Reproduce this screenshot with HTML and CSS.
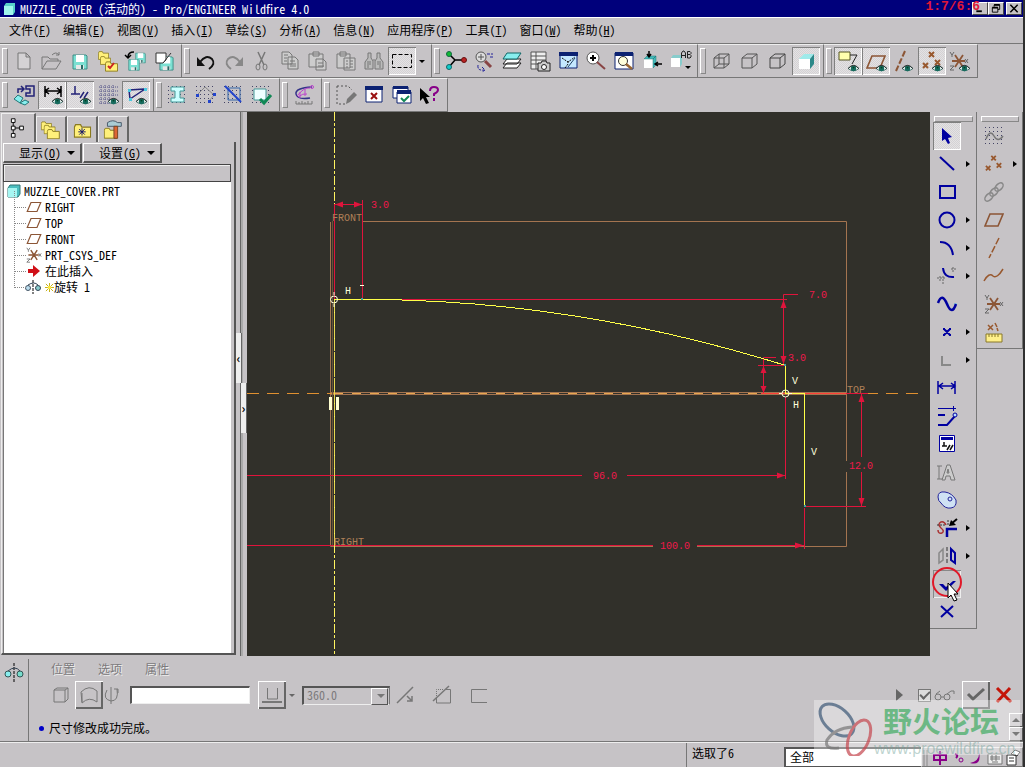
FILE: index.html
```html
<!DOCTYPE html>
<html lang="zh-CN">
<head>
<meta charset="utf-8">
<title>MUZZLE_COVER (活动的) - Pro/ENGINEER Wildfire 4.0</title>
<link rel="stylesheet" href="styles.css">
</head>
<body>
<svg class="defs" aria-hidden="true">
  <symbol id="eye" viewBox="0 0 12 10"><path d="M0 5Q6-1 12 5Q6 10 0 5z" fill="#fff" stroke="#27635a"/><circle cx="6" cy="5" r="3" fill="#176b5e"/><circle cx="6" cy="4" r="1" fill="#042"/><path d="M0 5Q6-2 12 5" fill="none" stroke="#222"/></symbol>
  <symbol id="disk" viewBox="0 0 16 16"><path d="M1 1h13l1 1v13H1z" fill="#7be0d2" stroke="#3c8c86"/><path d="M4 1h8v7H4z" fill="#fff"/><path d="M4 11h8v4H4z" fill="#e8e8e8"/><path d="M9 11h2v4H9z" fill="#286a66"/></symbol>
  <symbol id="folder" viewBox="0 0 14 11"><path d="M.5 2.500l1-2h4l1 2h7v8H.5z" fill="#fff07a" stroke="#8a7a20"/></symbol>
  <symbol id="plane" viewBox="0 0 20 16"><path d="M6 2h13l-5 12H1z" fill="none" stroke="#8c5636" stroke-width="1.600"/></symbol>
  <symbol id="csys" viewBox="0 0 20 20"><path d="M3 10h13M6 4l8 12M14 4L6 16" stroke="#8c5636" stroke-width="1.800" fill="none"/><path d="M1 1l2 3 2-3M3 4v2M16 8l3 4M19 8l-3 4M1 15h4l-4 4h4" stroke="#666" fill="none"/></symbol>
  <symbol id="xs" viewBox="0 0 20 20"><path d="M7 1l5 5M12 1L7 6M1 12l5 5M6 12l-5 5M13 9l5 5M18 9l-5 5" stroke="#98582e" stroke-width="2"/></symbol>
  <symbol id="grid" viewBox="0 0 20 20"><path d="M1 1.500h19M1 5.500h19M1 9.500h19M1 13.500h19M1 17.500h19" stroke="#446" stroke-dasharray="1 3"/></symbol>
</svg>

<header class="titlebar">
  <svg class="appicon" viewBox="0 0 14 14"><path d="M2 4l2-3h9v9l-2 3H2z" fill="#58d0c8"/><path d="M2 4h9v9H2z" fill="#a0f4ec"/></svg>
  <h1>MUZZLE_COVER (活动的) - Pro/ENGINEER Wildfire 4.0</h1>
  <div class="winbtns">
    <button aria-label="最小化"><svg viewBox="0 0 14 12"><path d="M3 9h6" stroke="#000" stroke-width="2"/></svg></button>
    <button aria-label="还原"><svg viewBox="0 0 14 12"><path d="M5 4V2h6v5H9M3 5h6v5H3z" fill="none" stroke="#000"/><path d="M5 2h6M3 5h6" stroke="#000" stroke-width="2"/></svg></button>
    <button class="close" aria-label="关闭"><svg viewBox="0 0 14 12"><path d="M3 2l8 8M11 2l-8 8" stroke="#000" stroke-width="1.600"/></svg></button>
  </div>
  <span class="clock">1:7/6:6</span>
</header>

<nav class="menubar">
  <button>文件(<u>F</u>)</button><button>编辑(<u>E</u>)</button><button>视图(<u>V</u>)</button><button>插入(<u>I</u>)</button><button>草绘(<u>S</u>)</button><button>分析(<u>A</u>)</button><button>信息(<u>N</u>)</button><button>应用程序(<u>P</u>)</button><button>工具(<u>T</u>)</button><button>窗口(<u>W</u>)</button><button>帮助(<u>H</u>)</button>
</nav>

<div class="toolrow">
  <div class="group">
    <button aria-label="新建"><svg viewBox="0 0 28 28"><path d="M8 6h8l4 4v12H8zM16 6v4h4" fill="#d4d2d4" stroke="#777"/></svg></button>
    <button aria-label="打开"><svg viewBox="0 0 28 28"><path d="M4 22V10h6l2 2h8v2M4 22l5-8h14l-5 8zM14 8q4-4 7 0m0-3v3h-3" fill="none" stroke="#777"/></svg></button>
    <button aria-label="保存"><svg viewBox="0 0 28 28"><use href="#disk" x="6" y="7" width="16" height="16"/></svg></button>
    <button aria-label="设置工作目录"><svg viewBox="0 0 28 28"><use href="#folder" x="4" y="4" width="11" height="9"/><path d="M7 13v3h4" fill="none" stroke="#555"/><use href="#folder" x="6" y="9" width="11" height="9"/><use href="#folder" x="11" y="14" width="13" height="11"/><path d="M14 19l2 2 4-5" fill="none" stroke="#c22" stroke-width="2"/></svg></button>
    <button aria-label="保存副本"><svg viewBox="0 0 28 28"><use href="#disk" x="13" y="5" width="11" height="12"/><use href="#disk" x="6" y="12" width="12" height="12"/><path d="M6 10q0-5 6-5M3 8l3 3 3-3" fill="none" stroke="#000" stroke-width="1.500"/></svg></button>
    <button aria-label="备份"><svg viewBox="0 0 28 28"><use href="#disk" x="9" y="9" width="15" height="15"/><path d="M6 6h10v7l-3 3H6z" fill="#fff" stroke="#333"/><path d="M13 16l8-10" stroke="#333"/></svg></button>
  </div>
  <div class="group">
    <button aria-label="撤消"><svg viewBox="0 0 28 28"><path d="M8 15q6-8 12-3 4 5-3 10" fill="none" stroke="#111" stroke-width="2"/><path d="M5 10v9h8z" fill="#111"/></svg></button>
    <button aria-label="重做"><svg viewBox="0 0 28 28"><path d="M20 15q-6-8-12-3-4 5 3 10" fill="none" stroke="#888" stroke-width="2"/><path d="M23 10v9h-8z" fill="#888"/></svg></button>
    <button aria-label="剪切"><svg viewBox="0 0 28 28"><path d="M10 5l6 13M17 5l-6 13" stroke="#777" stroke-width="1.500"/><ellipse cx="10" cy="20" rx="2" ry="3" fill="none" stroke="#777"/><ellipse cx="17" cy="20" rx="2" ry="3" fill="none" stroke="#777"/></svg></button>
    <button aria-label="复制"><svg viewBox="0 0 28 28"><path d="M6 5h7l3 3v9H6zM12 10h7l3 3v9H12zM8 8h4M8 11h3M8 14h3M14 14h5M14 17h6M14 19h6" fill="#ccc" stroke="#777"/></svg></button>
    <button aria-label="粘贴"><svg viewBox="0 0 28 28"><path d="M5 7h14v13H5zM9 5h6v4H9zM12 12h7l3 3v8H12zM14 16h5M14 19h6" fill="#ccc" stroke="#777"/></svg></button>
    <button aria-label="选择性粘贴"><svg viewBox="0 0 28 28"><path d="M5 7h13v14H5zM8 5h6v4H8zM12 11h11v12H12zM14 14h2M18 14h3M14 17h2M18 17h3M14 20h2M18 20h3" fill="#ccc" stroke="#777"/></svg></button>
    <button aria-label="查找"><svg viewBox="0 0 28 28"><path d="M8 6h3v5l2 3v8H5v-7l3-4zM17 6h3v5l3 4v7h-8v-8l2-3zM13 13h2M8 14v7M20 14v7M10 14v4M18 14v4" fill="#bbb" stroke="#777"/></svg></button>
    <button class="on" aria-label="选取框"><svg viewBox="0 0 28 28"><path d="M4.500 7.500h19v13h-19z" fill="none" stroke="#000" stroke-dasharray="4 2"/></svg></button>
    <button class="drop" aria-label="选取方式"><svg viewBox="0 0 12 28"><path d="M3 13h6l-3 3z"/></svg></button>
  </div>
  <div class="group">
    <button aria-label="模型树"><svg viewBox="0 0 28 28"><path d="M7 7l6 6-6 7M13 13h9" fill="none" stroke="#000" stroke-width="1.500"/><circle cx="7" cy="7" r="2.500" fill="#1b3" stroke="#164"/><circle cx="7" cy="20" r="2.500" fill="#1cc" stroke="#166"/><circle cx="22" cy="13" r="2.500" fill="#b22" stroke="#611"/></svg></button>
    <button aria-label="重定向"><svg viewBox="0 0 28 28"><circle cx="11" cy="10" r="5" fill="#ddd" stroke="#555"/><path d="M11 7v6M8 10h6" stroke="#555"/><path d="M15 14l6 6" stroke="#844" stroke-width="3"/><path d="M17 7h6M20 10h4M8 18q-1 6 6 5m-2-3l3 3-3 2" fill="none" stroke="#229" stroke-dasharray="3 1"/></svg></button>
    <button aria-label="层"><svg viewBox="0 0 28 28"><path d="M5 21l4-5h14l-4 5zM5 17l4-5h14l-4 5z" fill="#fff" stroke="#222"/><path d="M5 12l4-6h14l-4 6z" fill="#8ee" stroke="#166"/></svg></button>
    <button aria-label="视图管理器"><svg viewBox="0 0 28 28"><path d="M5 5h15v17H5zM5 9h15M5 13h15M5 17h15M10 5v17" fill="#eee" stroke="#555"/><path d="M12 16h3l1-2h4l1 2h3v8H12z" fill="#ccc" stroke="#222"/><circle cx="18" cy="20" r="2.500" fill="#fff" stroke="#222"/></svg></button>
    <button aria-label="重画"><svg viewBox="0 0 28 28"><path d="M6 6h17v15H6z" fill="#c4e8ff" stroke="#0c2272"/><path d="M5 5h19v4H5z" fill="#0c2272"/><path d="M8 11l6 4 7-5M14 14v3l-3 4" fill="none" stroke="#111" stroke-dasharray="2 1"/><path d="M14 20l7-9" stroke="#246"/></svg></button>
    <button aria-label="放大"><svg viewBox="0 0 28 28"><circle cx="11" cy="11" r="6" fill="#fff" stroke="#555"/><path d="M8 11h6M11 8v6" stroke="#000" stroke-width="2"/><path d="M15 15l8 7" stroke="#844" stroke-width="2"/></svg></button>
    <button aria-label="重新调整"><svg viewBox="0 0 28 28"><path d="M5 6h18v16H5z" fill="#fff" stroke="#0c2272"/><path d="M5 5h18v4H5z" fill="#0c2272"/><circle cx="13" cy="14" r="4.500" fill="#ffd" stroke="#333"/><path d="M16 17l6 5" stroke="#963" stroke-width="2.500"/></svg></button>
    <button aria-label="定向"><svg viewBox="0 0 28 28"><path d="M6 12h9v9H6z" fill="#fff"/><path d="M6 12l3-3h9l-3 3zM15 12l3-3v9l-3 3z" fill="#4bb" stroke="#277" stroke-width=".5"/><path d="M11 4v6M9 7l2 3 2-3M24 17h-6M20 15l-3 2 3 2" fill="none" stroke="#000" stroke-width="1.500"/></svg></button>
    <button aria-label="已保存视图"><svg viewBox="0 0 28 28"><path d="M5 11h9v9H5z" fill="#fff"/><path d="M5 11l2-3h9l-2 3zM14 11l2-3v9l-2 3z" fill="#8cc"/><path d="M15.500 11V6l1.500-2h1l1.500 2v5M16 8.500h3M21.500 11V4.500h2.500l1 1v1l-1 1h-2 2l1 1v1.500l-1 1h-2.500" fill="none" stroke="#222"/><path d="M19 19h6l-3 3z"/></svg></button>
  </div>
  <div class="group">
    <button aria-label="线框"><svg viewBox="0 0 28 28"><path d="M6 11h10v10H6zM6 11l5-4h10l-5 4M21 7v10l-5 4M11 7v10h10M11 17l-5 4" fill="none" stroke="#555"/></svg></button>
    <button aria-label="隐藏线"><svg viewBox="0 0 28 28"><path d="M6 11h10v10H6zM6 11l5-4h10l-5 4M21 7v10l-5 4" fill="none" stroke="#555"/></svg></button>
    <button aria-label="消隐"><svg viewBox="0 0 28 28"><path d="M6 11h10v10H6zM6 11l5-4h10l-5 4M21 7v10l-5 4" fill="none" stroke="#444"/></svg></button>
    <button class="on" aria-label="着色"><svg viewBox="0 0 28 28"><path d="M7 12l5-5h10l-4 5z" fill="#9eeaea"/><path d="M18 12l4-5v10l-4 5z" fill="#2b8888"/><path d="M7 12h11v10H7z" fill="#fff"/></svg></button>
  </div>
  <div class="group">
    <button class="on" aria-label="注释显示"><svg viewBox="0 0 28 28"><path d="M5 5h11v8H5z" fill="#ffffae" stroke="#552"/><path d="M16 8h7l-5 9" fill="none" stroke="#222"/><use href="#eye" x="14" y="17" width="11" height="9"/></svg></button>
    <button class="on" aria-label="平面显示"><svg viewBox="0 0 28 28"><use href="#plane" x="4" y="7" width="20" height="16"/><use href="#eye" x="14" y="17" width="11" height="9"/></svg></button>
    <button aria-label="轴显示"><svg viewBox="0 0 28 28"><path d="M15 4L6 24" stroke="#8c5636" stroke-width="2" stroke-dasharray="6 2"/><use href="#eye" x="12" y="17" width="11" height="9"/></svg></button>
    <button class="on" aria-label="点显示"><svg viewBox="0 0 28 28"><use href="#xs" x="4" y="4" width="20" height="20"/><use href="#eye" x="14" y="17" width="11" height="9"/></svg></button>
    <button aria-label="坐标系显示"><svg viewBox="0 0 28 28"><use href="#csys" x="3" y="4" width="20" height="20"/><use href="#eye" x="13" y="17" width="11" height="9"/></svg></button>
  </div>
</div>

<div class="toolrow">
  <div class="group">
    <button aria-label="草绘方向"><svg viewBox="0 0 28 28"><path d="M16 5h8v10h-8v-3h4V8h-4zM8 12V8h6M11 5l3 3-3 3" fill="none" stroke="#227" stroke-width="1.500"/><path d="M4 18l4-4 5 3-3 5zM10 22l5-3 4 2-4 3z" fill="#8ee" stroke="#277"/></svg></button>
    <button class="on" aria-label="显示尺寸"><svg viewBox="0 0 28 28"><path d="M7 5v11M23 5v11M8 10h14M11 7l-4 3 4 3M19 7l4 3-4 3" fill="none" stroke="#000" stroke-width="1.500"/><use href="#eye" x="14" y="16" width="11" height="9"/></svg></button>
    <button class="on" aria-label="显示约束"><svg viewBox="0 0 28 28"><path d="M9 5v8M5 13h9M14 17l4-6M18 17l4-6" fill="none" stroke="#227" stroke-width="1.500"/><use href="#eye" x="14" y="16" width="11" height="9"/></svg></button>
    <button aria-label="显示栅格"><svg viewBox="0 0 28 28"><path d="M5 6h19M5 10h19M5 14h19M5 18h12M5 22h10M7 4v20M11 4v20M15 4v20M19 4v12" stroke="#558" stroke-dasharray="1 1"/><use href="#eye" x="14" y="16" width="11" height="9"/></svg></button>
    <button class="on" aria-label="显示顶点"><svg viewBox="0 0 28 28"><path d="M7 9l16-1L8 18z" fill="none" stroke="#227" stroke-width="1.500"/><path d="M6 8h3v3H6zM22 7h3v3h-3zM7 17h3v3H7z" fill="#4ac8e0"/><use href="#eye" x="14" y="16" width="11" height="9"/></svg></button>
  </div>
  <div class="group">
    <button aria-label="着色封闭环"><svg viewBox="0 0 28 28"><use href="#grid" x="3" y="4" width="20" height="20"/><path d="M7 6h13v4h-4v7h4v4H7v-4h4v-7H7z" fill="#cff" stroke="#499"/></svg></button>
    <button aria-label="加亮开放端"><svg viewBox="0 0 28 28"><use href="#grid" x="3" y="4" width="20" height="20"/><path d="M5 14l8-8 9 8-5 6" fill="none" stroke="#888"/><path d="M4 13h3v3H4zM16 19h3v3h-3zM21 12h3v3h-3z" fill="#24c"/></svg></button>
    <button aria-label="重叠几何"><svg viewBox="0 0 28 28"><use href="#grid" x="3" y="4" width="20" height="20"/><path d="M8 7h12v12H8z" fill="none" stroke="#36a"/><path d="M5 5l16 16" stroke="#24c" stroke-width="2"/></svg></button>
    <button aria-label="特征要求"><svg viewBox="0 0 28 28"><use href="#grid" x="3" y="4" width="20" height="20"/><path d="M6 8h12v11H6z" fill="#efffff" stroke="#499"/><path d="M12 18l4 4 7-8" fill="none" stroke="#185" stroke-width="3"/></svg></button>
  </div>
  <div class="group">
    <button aria-label="分析"><svg viewBox="0 0 28 28"><path d="M22 6Q5 7 6 13t14 4" fill="none" stroke="#338" stroke-width="1.500"/><path d="M7 15q7-9 13-8M8 16q5-4 9-3M10 11v6M15 8v7" fill="none" stroke="#b4c"/><circle cx="22" cy="6" r="1.500" fill="none" stroke="#b4c"/><path d="M6 23h16v-3M6 20v3M9 21v2M12 20v3M15 21v2M18 20v3" fill="none" stroke="#777"/></svg></button>
  </div>
  <div class="group">
    <button aria-label="编辑定义"><svg viewBox="0 0 28 28"><path d="M5 5h11l4 4M5 5v18h8" fill="none" stroke="#555" stroke-dasharray="2 2"/><path d="M15 18l7-7 3 3-7 7-4 2z" fill="#777"/></svg></button>
    <button aria-label="关闭窗口"><svg viewBox="0 0 28 28"><path d="M6 6h16v15H6z" fill="#fff" stroke="#0c2272"/><path d="M5 5h18v4H5z" fill="#0c2272"/><path d="M11 12l6 6M17 12l-6 6" stroke="#911" stroke-width="2"/></svg></button>
    <button aria-label="激活窗口"><svg viewBox="0 0 28 28"><path d="M5 6h15v11H5z" fill="#fff" stroke="#0c2272"/><path d="M5 5h15v3H5z" fill="#0c2272"/><path d="M9 11h14v11H9z" fill="#fff" stroke="#0c2272"/><path d="M9 9h14v4H9z" fill="#0c2272"/><path d="M13 17l3 3 5-5" fill="none" stroke="#185" stroke-width="2"/></svg></button>
    <button aria-label="帮助"><svg viewBox="0 0 28 28"><path d="M4 7v13l3-3 3 6 3-1-3-6h4z"/><path d="M14 10q0-4 4-4 4 0 4 3 0 2-4 4v2M18 17v3" fill="none" stroke="#808" stroke-width="2"/></svg></button>
  </div>
</div>

<main class="workspace">
  <aside class="navigator">
    <div class="tabs">
      <button class="tab sel" aria-label="模型树"><svg viewBox="0 0 30 26"><path d="M10 3h4v4h-4zM10 11h4v4h-4zM10 19h4v4h-4zM19 11h4v4h-4z" fill="#fff" stroke="#000"/><path d="M12 7v4M12 15v4M14 13h5" stroke="#000"/></svg></button>
      <button class="tab" aria-label="文件夹浏览器"><svg viewBox="0 0 30 26"><use href="#folder" x="4" y="3" width="12" height="11"/><use href="#folder" x="7" y="7" width="13" height="11"/><use href="#folder" x="10" y="12" width="15" height="11"/></svg></button>
      <button class="tab" aria-label="收藏夹"><svg viewBox="0 0 30 26"><use href="#folder" x="6" y="6" width="19" height="16"/><path d="M15 11v8M11 15h8M12 12l6 6M18 12l-6 6" stroke="#116"/></svg></button>
      <button class="tab" aria-label="连接"><svg viewBox="0 0 30 26"><use href="#folder" x="5" y="10" width="15" height="13"/><path d="M9 5q6-4 11 0h4v4H9z" fill="#aaccd4" stroke="#456"/><path d="M16 9h4v13h-4z" fill="#d63" stroke="#742"/></svg></button>
    </div>
    <div class="navbody">
      <div class="navbtns"><button><span>显示(<u>O</u>)</span><i></i></button><button><span>设置(<u>G</u>)</span><i></i></button></div>
      <div class="treehead"></div>
      <ul class="tree">
        <li class="root"><svg viewBox="0 0 14 14"><path d="M1 4l2-3h10v9l-2 3H1z" fill="#4bbfc0" stroke="#377"/><path d="M1 4h9v9H1z" fill="#a6f6f2"/></svg>MUZZLE_COVER.PRT</li>
        <li><svg viewBox="0 0 20 16"><use href="#plane" x="1" y="2" width="16" height="12"/></svg>RIGHT</li>
        <li><svg viewBox="0 0 20 16"><use href="#plane" x="1" y="2" width="16" height="12"/></svg>TOP</li>
        <li><svg viewBox="0 0 20 16"><use href="#plane" x="1" y="2" width="16" height="12"/></svg>FRONT</li>
        <li><svg viewBox="0 0 20 16"><use href="#csys" x="1" y="0" width="16" height="16"/></svg>PRT_CSYS_DEF</li>
        <li><svg viewBox="0 0 20 16"><path d="M3 6h5V2l7 6-7 6v-4H3z" fill="#d01018"/></svg>在此插入</li>
        <li><svg viewBox="0 0 20 16"><path d="M8 1v14" stroke="#000" stroke-dasharray="3 1"/><circle cx="3" cy="9" r="2.500" fill="#bde" stroke="#456"/><circle cx="13" cy="9" r="2.500" fill="#8cc" stroke="#345"/><path d="M3 6q6-4 10 0" fill="none" stroke="#345"/></svg><svg class="star" viewBox="0 0 10 10"><path d="M5 0v10M0 5h10M1 1l8 8M9 1L1 9" stroke="#c0a800"/><circle cx="5" cy="5" r="2" fill="#ffe840"/></svg>旋转 1</li>
      </ul>
    </div>
  </aside>
  <div class="splitter"><button aria-label="收起">‹</button><button class="r" aria-label="展开">›</button></div>

  <section class="canvas">
    <svg viewBox="247 112 683 544" fill="none">
      <g stroke="#a47450"><path d="M697 546.500H846.500V472M846.500 461V221.500H362M330.500 222V546.500H653M331 392.500H846M331 394.500H846"/></g>
      <path d="M247 393.500H334M846 393.500H923" stroke="#e09030" stroke-dasharray="12 8"/>
      <path d="M334 393.500H846" stroke="#e8a850" stroke-dasharray="9 9"/>
      <path d="M332.500 221v325" stroke="#6a5238"/>
      <path d="M334.500 112v544" stroke="#fff460" stroke-dasharray="9 2 3 2"/>
      <g stroke="#e0143c">
        <path d="M334.500 204V299M362.500 200V298M334 204.500H362M334 299.500H787M783.500 299V364M783.500 299V294.500H798M763.500 365V393M763.500 365V357.500H776M758 365.500H784M861.500 393V457M861.500 472V506M806 506.500H866M247 475.500H582M627 475.500H785M785.500 397V479M247 545.500H653M697 545.500H804M804.500 508V549M846 393.500H868"/>
      </g>
      <path d="M761 393.500H846" stroke="#ff4038"/>
      <g fill="#e0143c"><path d="M335 204.500l8-3v6zM362 204.500l-8-3v6zM783.500 300l-3 8h6zM783.500 364l-3-8h6zM763.500 366l-3 7h6zM763.500 393l-3-7h6zM861.500 394l-3 8h6zM861.500 506l-3-8h6zM785 475.500l-8-3v6zM804 545.500l-9-3v6z"/></g>
      <path d="M334 299.500H362" stroke="#ffff48"/>
      <path d="M362 299.500Q573 299 785.500 365.500V393.500H804.500V506" stroke="#ffff48" shape-rendering="crispEdges"/>
      <path d="M334.500 300V546" stroke="#e8d850" stroke-dasharray="12 1"/>
      <g stroke="#ffffdc"><circle cx="334" cy="299.500" r="3.500"/><circle cx="785.500" cy="393.500" r="3.500"/><path d="M334 292v3M334 304v3M779 393.500h3M789 393.500h3M360 285.500h4"/></g>
      <path d="M329 397h3v13h-3zM336 397h3v13h-3z" fill="#ffffd0"/>
      <path d="M361 298h2v2h-2zM784 364h2v2h-2zM804 505h2v2h-2z" fill="#40a0a0"/>
      <g class="dim"><text x="371" y="208">3.0</text><text x="809" y="298">7.0</text><text x="788" y="361">3.0</text><text x="849" y="469">12.0</text><text x="593" y="479">96.0</text><text x="660" y="549">100.0</text></g>
      <g class="datum"><text x="332" y="221">FRONT</text><text x="847" y="393">TOP</text><text x="334" y="545">RIGHT</text></g>
      <g class="con"><text x="345" y="294">H</text><text x="792" y="384">V</text><text x="793" y="408">H</text><text x="811" y="455">V</text></g>
    </svg>
  </section>

  <div class="vbar">
    <div class="vtool on"><button aria-label="选取"><svg viewBox="0 0 28 28"><path d="M9 6v13l3-2 3 5 2-1-2-5 4-1z" fill="#0000a0"/></svg></button></div>
    <div class="vtool more"><button aria-label="线"><svg viewBox="0 0 28 28"><path d="M7 7l14 13" stroke="#0000a0" stroke-width="2"/></svg></button></div>
    <div class="vtool"><button aria-label="矩形"><svg viewBox="0 0 28 28"><path d="M7 8h15v12H7z" fill="none" stroke="#0000a0" stroke-width="2"/></svg></button></div>
    <div class="vtool more"><button aria-label="圆"><svg viewBox="0 0 28 28"><circle cx="14" cy="14" r="7.500" fill="none" stroke="#0000a0" stroke-width="2"/></svg></button></div>
    <div class="vtool more"><button aria-label="弧"><svg viewBox="0 0 28 28"><path d="M7 8q11 0 13 13" fill="none" stroke="#0000a0" stroke-width="2"/></svg></button></div>
    <div class="vtool more"><button aria-label="圆角"><svg viewBox="0 0 28 28"><path d="M10 6q1 10 11 9" fill="none" stroke="#0000a0" stroke-width="2"/><path d="M4 16h9M10 14v9M7 14v6M18 7h5M20 5v5" stroke="#666" stroke-dasharray="2 1"/></svg></button></div>
    <div class="vtool"><button aria-label="样条"><svg viewBox="0 0 28 28"><path d="M8 8h3M13 14h3M16 19h4M21 14h3" stroke="#6ce"/><path d="M5 13q4-11 9 1t9 0" fill="none" stroke="#0000a0" stroke-width="2.500"/></svg></button></div>
    <div class="vtool more"><button aria-label="点"><svg viewBox="0 0 28 28"><path d="M11 11l6 6M17 11l-6 6M10 11h2M16 11h2M10 17h2M16 17h2" stroke="#0000a0" stroke-width="2"/></svg></button></div>
    <div class="vtool more"><button aria-label="使用边"><svg viewBox="0 0 28 28"><path d="M9 10v9h9" fill="none" stroke="#888" stroke-width="2"/></svg></button></div>
    <div class="vtool"><button aria-label="尺寸"><svg viewBox="0 0 28 28"><path d="M5 7v13M22 7v13M6 12h16M10 9l-4 3 4 3M18 9l4 3-4 3" fill="none" stroke="#0000a0" stroke-width="1.500"/></svg></button></div>
    <div class="vtool"><button aria-label="修改"><svg viewBox="0 0 28 28"><path d="M5 6.500h18M20.500 4v5" stroke="#0000a0"/><path d="M5 13h7M5 23h9l8-9" fill="none" stroke="#0000a0" stroke-width="2"/><circle cx="22" cy="13" r="2" fill="#bdf" stroke="#0000a0"/></svg></button></div>
    <div class="vtool"><button aria-label="约束"><svg viewBox="0 0 28 28"><path d="M6.500 5.500h15v16h-15z" fill="#fff" stroke="#0000a0"/><path d="M8 7h12v3H8z" fill="#0000a0"/><path d="M11 12v4M9 16h5M14 20l3-5M17 20l3-5" stroke="#111" stroke-width="1.500"/></svg></button></div>
    <div class="vtool"><button aria-label="文本"><svg viewBox="0 0 28 28"><path d="M6 8v13M4 8h5M4 21h5M9 22l5-15h3l5 15h-4l-1-4h-4l-1 4zM14 15h2l-1-4z" fill="#ccc" stroke="#777"/></svg></button></div>
    <div class="vtool"><button aria-label="调色板"><svg viewBox="0 0 28 28"><path d="M5 11Q5 5 12 6t11 8q1 7-5 8T8 17q-3-2-3-6z" fill="#cfe2f4" stroke="#229"/><circle cx="17" cy="13" r="2" fill="none" stroke="#229"/></svg></button></div>
    <div class="vtool more"><button aria-label="修剪"><svg viewBox="0 0 28 28"><path d="M5 16q0 4 4 3 3-2-1-5-4-4 0-6 3-1 5 3" fill="none" stroke="#a33" stroke-width="1.500"/><path d="M4 11h9M15 6v6" stroke="#333" stroke-dasharray="2 1"/><path d="M14 23v-8h10" fill="none" stroke="#0000a0" stroke-width="2.500"/><path d="M24 5l-6 5" stroke="#000" stroke-width="2"/><path d="M16 12l2-6 5 5z"/></svg></button></div>
    <div class="vtool more"><button aria-label="镜像"><svg viewBox="0 0 28 28"><path d="M14 5v18" stroke="#333" stroke-dasharray="4 2"/><path d="M6 11l4-4v11l-4 3z" fill="none" stroke="#888" stroke-width="1.500"/><path d="M18 7l4 4v10l-4-3z" fill="none" stroke="#0000a0" stroke-width="2"/></svg></button></div>
    <div class="vtool done"><button aria-label="完成"><svg viewBox="0 0 28 28"><path d="M6 14h4l3 3 7-6h3l-10 10z" fill="#0000a0"/></svg></button>
      <svg class="pointer" viewBox="0 0 34 36"><circle cx="16" cy="16" r="14" fill="none" stroke="#e01828" stroke-width="2"/><path d="M17 17v15l3-3 3 6 3-1-3-6h4z" fill="#fff" stroke="#000"/></svg></div>
    <div class="vtool"><button aria-label="退出"><svg viewBox="0 0 28 28"><path d="M8 8l12 11M20 8L8 19" stroke="#0000a0" stroke-width="2"/></svg></button></div>
  </div>
  <div class="vbar second">
    <div class="vtool"><button aria-label="草绘工具"><svg viewBox="0 0 28 28"><use href="#grid" x="4" y="4" width="20" height="20"/><path d="M6 17q4-10 8-3t9 0" fill="none" stroke="#777" stroke-width="1.500"/></svg></button></div>
    <div class="vtool more"><button aria-label="基准点"><svg viewBox="0 0 28 28"><use href="#xs" x="5" y="5" width="18" height="18"/></svg></button></div>
    <div class="vtool"><button aria-label="链"><svg viewBox="0 0 28 28"><g fill="none" stroke="#888" stroke-width="1.500"><ellipse cx="9" cy="19" rx="5" ry="3" transform="rotate(-45 9 19)"/><ellipse cx="14" cy="14" rx="5" ry="3" transform="rotate(-45 14 14)"/><ellipse cx="19" cy="9" rx="5" ry="3" transform="rotate(-45 19 9)"/></g></svg></button></div>
    <div class="vtool"><button aria-label="基准平面"><svg viewBox="0 0 28 28"><use href="#plane" x="4" y="6" width="20" height="16"/></svg></button></div>
    <div class="vtool"><button aria-label="基准轴"><svg viewBox="0 0 28 28"><path d="M19 4L9 24" stroke="#98582e" stroke-width="1.500" stroke-dasharray="7 2"/></svg></button></div>
    <div class="vtool"><button aria-label="基准曲线"><svg viewBox="0 0 28 28"><path d="M4 19q5-9 9-5 4 3 10-7" fill="none" stroke="#98582e" stroke-width="1.500"/></svg></button></div>
    <div class="vtool"><button aria-label="坐标系"><svg viewBox="0 0 28 28"><use href="#csys" x="4" y="4" width="20" height="20"/></svg></button></div>
    <div class="vtool"><button aria-label="分析特征"><svg viewBox="0 0 28 28"><path d="M8 7l5 5M13 7l-5 5M15 5l2 4M17 10l1 3" stroke="#98582e" stroke-width="1.500"/><path d="M6 16h16v8H6zM9 16v3M12 16v3M15 16v3M18 16v3" fill="#fff08a" stroke="#88782a"/></svg></button></div>
  </div>
</main>

<section class="dashboard">
  <div class="feature"><svg viewBox="0 0 20 20"><path d="M10 0v20" stroke="#000" stroke-dasharray="3 1"/><path d="M4 8q7-6 12 0" fill="none" stroke="#345"/><circle cx="4" cy="11" r="3" fill="#8ee" stroke="#355"/><circle cx="16" cy="11" r="3" fill="#7dc" stroke="#355"/></svg></div>
  <div class="dashmain">
    <div class="slides"><button disabled>位置</button><button disabled>选项</button><button disabled>属性</button></div>
    <div class="controls">
      <button class="ic" aria-label="实体" disabled><svg viewBox="0 0 28 28"><path d="M7 9h11v12H7zM7 9l3-2h11v11l-3 3M18 9l3-2" fill="none" stroke="#777"/></svg></button>
      <button class="ic raised" aria-label="曲面" disabled><svg viewBox="0 0 28 28"><path d="M6 11q8-8 16-1v11q-8-6-15 1zM7 12v9" fill="none" stroke="#777"/></svg></button>
      <svg class="rot" viewBox="0 0 20 28"><path d="M4 9q-5 9 4 11 8 0 6-12M11 8h4v4M8 6v17" fill="none" stroke="#777"/></svg>
      <input class="collector" type="text" aria-label="截面">
      <button class="ic raised" aria-label="角度选项" disabled><svg viewBox="0 0 28 28"><path d="M9.500 7v11h10V7" fill="none" stroke="#777"/><path d="M4 21h20" stroke="#777" stroke-width="2"/></svg></button>
      <svg class="dd" viewBox="0 0 12 28"><path d="M3 13h6l-3 3z" fill="#666"/></svg>
      <span class="combo"><select aria-label="角度" disabled><option>360.0</option></select></span>
      <button class="ic flip" aria-label="反向" disabled><svg viewBox="0 0 28 28"><path d="M5 22L21 6M15 15l5 5M20 15v5h-5" fill="none" stroke="#777" stroke-width="1.500"/></svg></button>
      <button class="ic" aria-label="去除材料" disabled><svg viewBox="0 0 28 28"><path d="M5 20L21 5" stroke="#777" stroke-width="1.500"/><path d="M8.500 16v6h14V8.500H18" fill="none" stroke="#777"/><path d="M8.500 15V8.500H16" fill="none" stroke="#777" stroke-dasharray="1 1"/></svg></button>
      <button class="ic thin" aria-label="加厚" disabled><svg viewBox="0 0 28 28"><path d="M23 8.500H7.500v13H23" fill="none" stroke="#777"/></svg></button>
      <div class="finish">
        <svg class="play" viewBox="0 0 10 14"><path d="M2 1l7 6-7 6z" fill="#666"/></svg>
        <input id="pv" type="checkbox" checked disabled><label for="pv" aria-label="预览"><svg viewBox="0 0 22 14"><circle cx="4" cy="9" r="3" fill="none" stroke="#777"/><circle cx="13" cy="9" r="3" fill="none" stroke="#777"/><path d="M2 6l4-3M7 9h3M13 6l4-3h3v3" fill="none" stroke="#777"/></svg></label>
        <button class="ic raised" aria-label="应用"><svg viewBox="0 0 28 28"><path d="M6 13l5 5L22 8" fill="none" stroke="#666" stroke-width="3"/></svg></button>
        <button class="ic" aria-label="取消"><svg viewBox="0 0 28 28"><path d="M7 7l14 14M20 7L7 21" stroke="#c41408" stroke-width="3"/></svg></button>
      </div>
    </div>
    <p class="message">尺寸修改成功完成。</p>
  </div>
  <div class="scroll"><button aria-label="向上"><i></i></button><button class="down" aria-label="向下"><i></i></button></div>
</section>

<footer class="status">
  <span class="hint"></span>
  <span class="count">选取了6</span>
  <select aria-label="过滤器"><option>全部</option></select>
  <div class="ime">
    <svg viewBox="0 0 100 20"><path d="M2 2v16M5 2v16" stroke="#888"/><path d="M12 7h12v5H12zM18 3v14" fill="none" stroke="#808" stroke-width="2"/><path d="M33 6q4 1 1 4" fill="none" stroke="#808" stroke-width="2"/><circle cx="39" cy="12" r="2" fill="none" stroke="#808"/><path d="M57 4q1 9-9 11 12 3 9-11z" fill="#808"/><path d="M66 6h14v10H66zM68 9h10M68 11h10M70 14h6M70 7v6M74 7v6" fill="#eee" stroke="#777"/><path d="M85 7h9v10h-9zM87 10h5M87 13h5M89 6l4-4 5 2-3 4z" fill="#fff" stroke="#333"/></svg>
  </div>
</footer>

<div class="watermark">
  <svg viewBox="0 0 60 56" fill="none"><ellipse cx="23" cy="20" rx="12" ry="20" transform="rotate(-48 23 20)" stroke="#3d5877" stroke-width="3"/><ellipse cx="45" cy="38" rx="10" ry="19" transform="rotate(22 45 38)" stroke="#c5464e" stroke-width="3"/><path d="M38 27q-17 1-25 13-3 10 12 8" stroke="#777" stroke-width="3"/></svg>
  <div><strong>野火论坛</strong><span>www.proewildfire.cn</span></div>
</div>
</body>
</html>
```

FILE: styles.css
```css
* { box-sizing: border-box; }
body {
  margin: 0; min-height: 100vh; display: flex; flex-direction: column; position: relative;
  background: #c6c3c6; color: #000; border-right: 2px solid #303030;
  font-family: "Noto Sans CJK SC", "Liberation Sans", sans-serif; font-size: 12px; line-height: 16px;
  font-feature-settings: "hwid"; overflow: hidden;
}
button, input, select { font: inherit; font-feature-settings: inherit; color: inherit; margin: 0; padding: 0; border: 0; border-radius: 0; background: none; }
svg { display: block; flex: none; }
.defs { position: absolute; width: 0; height: 0; }
u { text-underline-offset: 1px; }

.titlebar { display: flex; align-items: center; height: 17px; background: #00007b; color: #fff; padding-left: 2px; position: relative; flex: none; }
.titlebar h1 { font-size: 12px; font-weight: 400; line-height: 16px; margin: 0 0 0 4px; flex: 1; white-space: nowrap; }
.appicon { width: 14px; height: 14px; }
.winbtns { display: flex; padding-right: 1px; }
.winbtns button { width: 16px; height: 13px; background: #c6c3c6; border: 1px solid; border-color: #fff #444 #444 #fff; }
.winbtns svg { width: 14px; height: 11px; }
.winbtns .close { margin-left: 2px; }
.clock { position: absolute; right: 43px; top: -1px; color: #e01838; font: bold 13px/16px "Liberation Mono", monospace; }

.menubar { display: flex; align-items: center; gap: 12px; height: 27px; padding: 0 9px 2px; border-top: 1px solid #fff; border-bottom: 1px solid #777; flex: none; }
.menubar button { white-space: nowrap; }

.toolrow { display: flex; flex: none; }
.group { display: flex; height: 34px; padding: 2px 3px 2px 10px; border: solid; border-width: 1px 1px 1px 0; border-color: #eee #777 #777; position: relative; }
.group::before { content: ""; position: absolute; left: 2px; top: 3px; bottom: 3px; width: 4px; border: 1px solid; border-color: #fff #888 #888 #fff; }
.group button { width: 28px; height: 28px; flex: none; }
.group .drop { width: 12px; }
.group svg { width: 100%; height: 28px; }
.on, .vtool.on button { background: repeating-conic-gradient(#d4d2d4 0 25%, #e4e2e4 0 50%) 0 0 / 2px 2px; box-shadow: inset 1px 1px #808080, inset -1px -1px #fff; }

.workspace { display: flex; flex: 1; min-height: 0; }
.navigator { width: 236px; display: flex; flex-direction: column; padding: 1px 0 1px 1px; flex: none; }
.tabs { display: flex; align-items: flex-end; height: 29px; flex: none; }
.tab { width: 31px; height: 26px; border: solid; border-width: 1px 2px 0 1px; border-color: #eee #666 #eee #eee; }
.tab.sel { width: 35px; height: 29px; }
.tab svg { width: 28px; height: 24px; }
.navbody { flex: 1; display: flex; flex-direction: column; padding: 1px 3px 0 1px; border: solid; border-width: 0 2px 2px 1px; border-color: #eee #555 #555 #eee; }
.navbtns { display: flex; gap: 1px; flex: none; }
.navbtns button { width: 79px; height: 20px; border: 1px solid; border-color: #fff #555 #555 #fff; border-right-width: 2px; border-bottom-width: 2px; display: flex; align-items: center; justify-content: flex-end; gap: 6px; padding-right: 5px; white-space: nowrap; }
.navbtns i { border: 4px solid transparent; border-top-color: #000; border-bottom: 0; }
.treehead { height: 18px; margin-top: 1px; border: 1px solid #444; box-shadow: inset 1px 1px #eee; flex: none; }
.tree { flex: 1; margin: 0; padding: 1px 0 0 3px; list-style: none; background: #fff; border-left: 1px solid #777; }
.tree li { display: flex; align-items: center; height: 16px; margin-left: 7px; padding-left: 11px; position: relative; white-space: nowrap; }
.tree li::before { content: ""; position: absolute; left: 0; top: -8px; width: 11px; height: 16px; border: dotted #888; border-width: 0 0 1px 1px; }
.tree .root { margin-left: 0; padding-left: 0; gap: 3px; }
.tree .root::before { display: none; }
.tree svg { width: 20px; height: 16px; }
.tree .root svg { width: 14px; height: 14px; }
.tree .star { width: 9px; height: 9px; }
.splitter { width: 11px; background: linear-gradient(90deg, #c6c3c6 4px, #666 4px 5px, #aaa 5px 7px, #c6c3c6 7px); flex: none; display: flex; flex-direction: column; justify-content: center; padding-bottom: 2px; }
.splitter button { width: 6px; height: 50px; background: #eee; border-right: 1px solid #666; line-height: 48px; font-weight: 700; }
.splitter .r { align-self: flex-end; }

.canvas { flex: 1; min-width: 0; background: #31302a; }
.canvas svg { width: 100%; height: 100%; }
.canvas text { font: 10px/12px "Liberation Mono", monospace; }
.dim { fill: #f0184c; }
.datum { fill: #b08058; }
.con { fill: #ffffdc; }

.vbar { width: 47px; align-self: flex-start; padding: 10px 0 2px 3px; border: solid; border-width: 0 1px 1px 0; border-color: #777; position: relative; flex: none; }
.vbar.second { width: 46px; }
.vbar::before { content: ""; position: absolute; left: 4px; right: 3px; top: 4px; height: 4px; border: 1px solid; border-color: #fff #888 #888 #fff; }
.vtool { height: 28px; display: flex; align-items: center; position: relative; }
.vtool.on { background: none; box-shadow: none; }
.vtool button, .vtool button svg { width: 28px; height: 28px; }
.vtool.more::after { content: ""; border: 3px solid transparent; border-left: 4px solid #000; border-right: 0; margin-left: 5px; }
.done button { box-shadow: inset 1px 1px #888, inset -1px -1px #eee; }
.pointer { position: absolute; left: -2px; top: -4px; width: 34px; height: 36px; }

.dashboard { display: flex; height: 86px; border-bottom: 1px solid #777; flex: none; }
.feature { width: 29px; margin: 3px 0 0; padding: 4px 0 0 4px; border-right: 1px solid #777; }
.feature svg { width: 20px; height: 20px; }
.dashmain { flex: 1; padding: 5px 0 0; min-width: 0; }
.slides { display: flex; gap: 23px; padding-left: 22px; height: 20px; color: #7c7a7c; }
.slides button { height: 16px; text-shadow: 1px 1px #eee; }
.controls { display: flex; align-items: center; height: 28px; padding-left: 18px; }
.ic, .ic svg { width: 28px; height: 28px; flex: none; }
.raised { box-shadow: inset 1px 1px #fff, inset -2px -2px #666; }
.rot { width: 20px; height: 28px; margin: 0 7px 0 0; }
.collector { width: 120px; height: 18px; background: #fff; border: solid; border-width: 2px 1px 1px 2px; border-color: #555 #eee #eee #555; margin-right: 8px; }
.dd { width: 12px; height: 28px; margin-right: 4px; }
.combo { position: relative; width: 88px; height: 19px; }
.combo select { appearance: none; display: block; width: 100%; height: 100%; padding: 0 0 2px 3px; border: solid; border-width: 2px 1px 1px 2px; border-color: #555 #777 #eee #555; color: #7c7a7c; opacity: 1; line-height: 14px; }
.combo::before { content: ""; position: absolute; right: 2px; top: 2px; width: 15px; height: 15px; border: 1px solid; border-color: #fff #555 #555 #fff; pointer-events: none; }
.combo::after { content: ""; position: absolute; right: 5px; top: 8px; border: 4px solid transparent; border-top-color: #777; border-bottom: 0; pointer-events: none; }
.flip { margin: 0 8px 0 2px; }
.thin { margin-left: 8px; }
.finish { display: flex; align-items: center; margin-left: auto; }
.play { width: 10px; height: 14px; margin-right: 14px; }
.finish input { appearance: none; width: 13px; height: 13px; border: 1px solid #777; background: #ddd; display: grid; place-items: center; }
.finish input::after { content: ""; width: 8px; height: 4px; border: solid #666; border-width: 0 0 2px 2px; rotate: -45deg; margin-bottom: 2px; }
.finish label svg { width: 22px; height: 14px; margin: 0 6px 0 3px; }
.message { display: flex; align-items: center; gap: 5px; margin: 10px 0 0 10px; line-height: 18px; }
.message::before { content: ""; width: 5px; height: 5px; border-radius: 50%; background: #0000c8; }
.scroll { align-self: flex-end; width: 14px; margin-left: -9px; }
.scroll button { display: grid; place-items: center; width: 14px; height: 14px; border: 1px solid; border-color: #fff #555 #555 #fff; }
.scroll i { border: 4px solid transparent; border-bottom-color: #333; border-top: 0; }
.scroll .down i { border: 4px solid transparent; border-top-color: #333; border-bottom: 0; }

.status { display: flex; height: 25px; border-top: 1px solid #eee; flex: none; }
.hint { flex: 1; border-right: 1px solid #777; }
.count { width: 97px; padding: 2px 0 0 5px; }
.status select { appearance: none; width: 137px; height: 20px; margin-top: 4px; padding: 0 0 2px 4px; background: #fff; border: solid; border-width: 2px 0 1px 2px; border-color: #555; line-height: 16px; }
.ime { width: 102px; margin-top: 4px; border: 1px solid; border-color: #eee #777 #777 #eee; }
.ime svg { width: 100px; height: 20px; }

.watermark { position: absolute; right: 3px; bottom: 12px; width: 206px; height: 55px; display: flex; background: rgba(255, 255, 255, .35); pointer-events: none; }
.watermark > svg { width: 60px; height: 56px; opacity: .7; }
.watermark div { display: flex; flex-direction: column; width: 146px; font-feature-settings: normal; }
.watermark strong { font-size: 29px; line-height: 40px; padding-left: 9px; color: rgba(60, 170, 95, .7); white-space: nowrap; }
.watermark span { font: 16px/18px "Liberation Sans", sans-serif; color: rgba(110, 160, 150, .45); white-space: nowrap; }
```
